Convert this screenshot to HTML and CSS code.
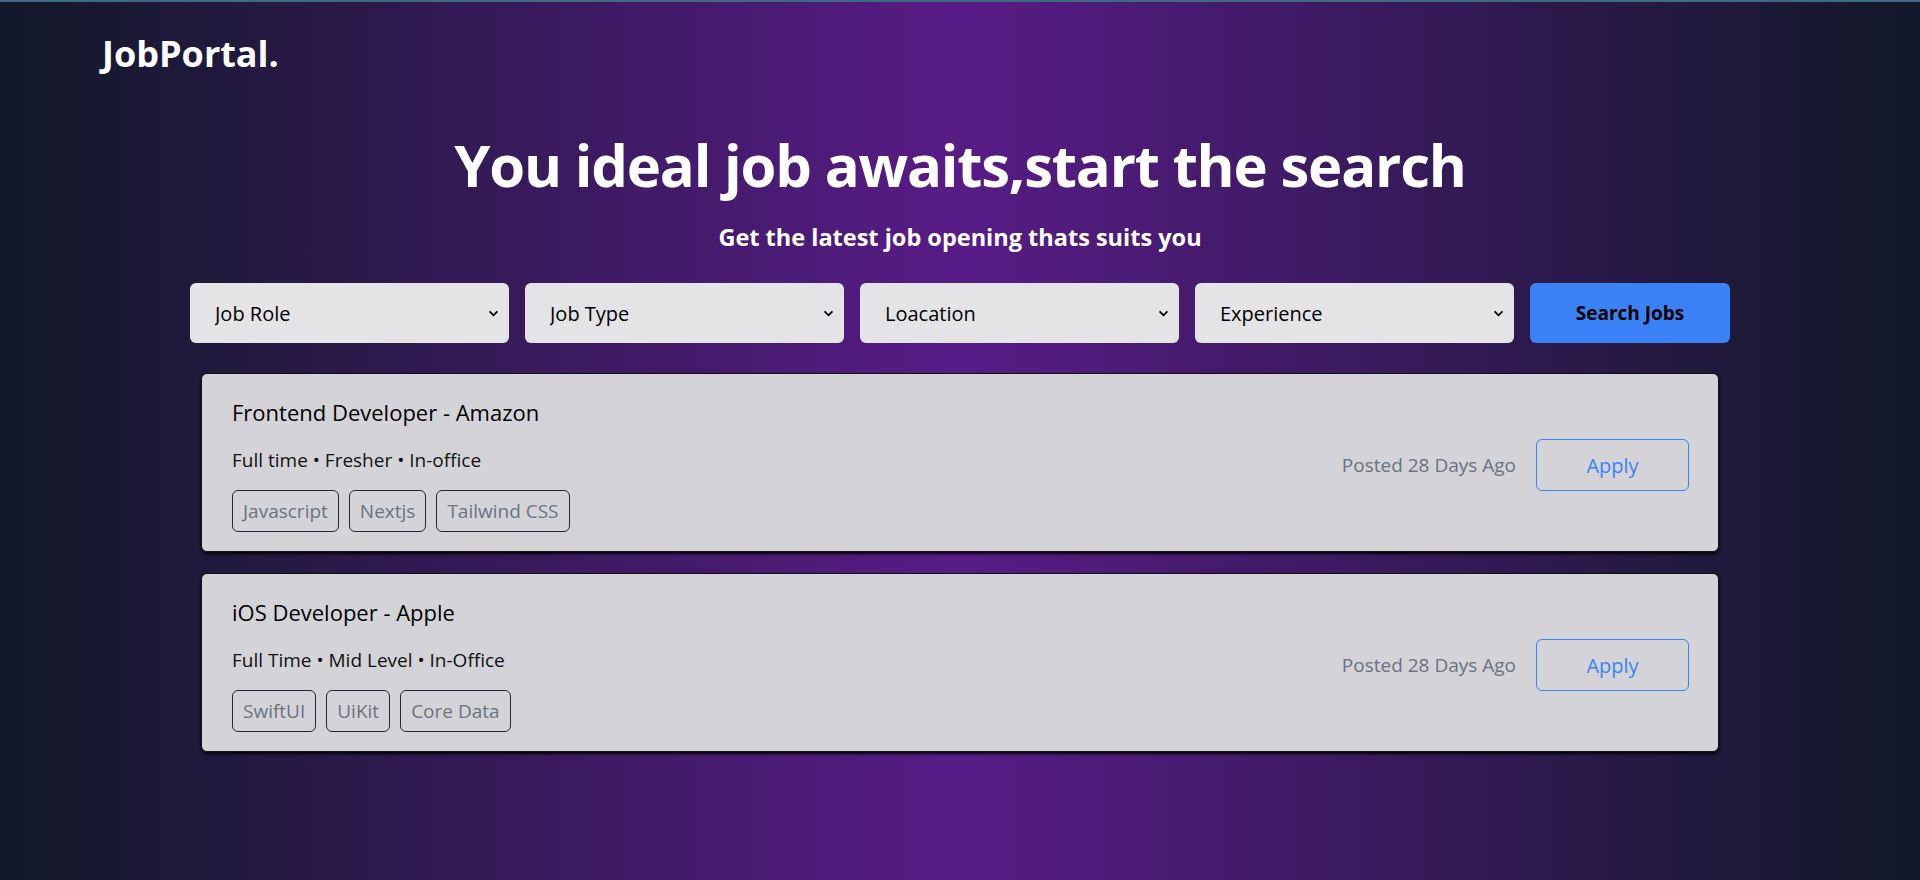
FILE: index.html
```html
<!DOCTYPE html>
<html lang="en">
<head>
<meta charset="utf-8">
<title>JobPortal</title>
<link rel="stylesheet" href="styles.css">
</head>
<body>
<div class="page">
  <header class="nav">
    <div class="logo">JobPortal.</div>
  </header>
  <main class="hero">
    <h1 class="title">You ideal job awaits,start the search</h1>
    <p class="subtitle">Get the latest job opening thats suits you</p>
    <form class="filters">
      <select class="filter"><option>Job Role</option></select>
      <select class="filter"><option>Job Type</option></select>
      <select class="filter"><option>Loacation</option></select>
      <select class="filter"><option>Experience</option></select>
      <button type="button" class="search-btn">Search Jobs</button>
    </form>
    <section class="jobs">
      <article class="job-card">
        <div class="job-info">
          <h2 class="job-title">Frontend Developer - Amazon</h2>
          <p class="job-meta">Full time • Fresher • In-office</p>
          <div class="tags">
            <span class="tag">Javascript</span>
            <span class="tag">Nextjs</span>
            <span class="tag">Tailwind CSS</span>
          </div>
        </div>
        <div class="job-actions">
          <span class="posted">Posted 28 Days Ago</span>
          <button type="button" class="apply-btn">Apply</button>
        </div>
      </article>
      <article class="job-card">
        <div class="job-info">
          <h2 class="job-title">iOS Developer - Apple</h2>
          <p class="job-meta">Full Time • Mid Level • In-Office</p>
          <div class="tags">
            <span class="tag">SwiftUI</span>
            <span class="tag">UiKit</span>
            <span class="tag">Core Data</span>
          </div>
        </div>
        <div class="job-actions">
          <span class="posted">Posted 28 Days Ago</span>
          <button type="button" class="apply-btn">Apply</button>
        </div>
      </article>
    </section>
  </main>
</div>
</body>
</html>
```
FILE: styles.css
```css
* { box-sizing: border-box; }
html, body { margin: 0; padding: 0; }
body {
  font-family: "Open Sans", "Noto Sans", sans-serif;
  color: #fff;
}
.page {
  min-height: 880px;
  border-top: 2px solid #3e6b82;
  background: linear-gradient(to right, #111827, #581c87, #111827);
}
.nav {
  padding: 32px 102px 0;
}
.logo {
  font-size: 36px;
  line-height: 40px;
  font-weight: 700;
  color: #fff;
}
.hero {
  display: flex;
  flex-direction: column;
  align-items: center;
}
.title {
  margin: 61px 0 0;
  font-size: 58px;
  line-height: 60px;
  font-weight: 700;
  letter-spacing: -1.2px;
}
.subtitle {
  margin: 28px 0 0;
  font-size: 23.5px;
  line-height: 28px;
  font-weight: 700;
}
.filters {
  margin-top: 32px;
  width: 1540px;
  display: flex;
  gap: 16px;
}
.filter {
  flex: 1;
  min-width: 0;
  height: 60px;
  border: none;
  border-radius: 6px;
  padding: 0 32px 0 25px;
  font-family: inherit;
  font-size: 20px;
  font-weight: 500;
  color: #000;
  background-color: #e4e4e7;
  -webkit-appearance: none;
  appearance: none;
  background-image: url("data:image/svg+xml,%3Csvg xmlns='http://www.w3.org/2000/svg' width='12' height='8' viewBox='0 0 12 8'%3E%3Cpath d='M1.5 1.5 L6 6 L10.5 1.5' fill='none' stroke='%23000' stroke-width='2'/%3E%3C/svg%3E");
  background-repeat: no-repeat;
  background-position: right 10px center;
  background-size: 11px 7px;
}
.search-btn {
  width: 200px;
  flex: none;
  height: 60px;
  border: none;
  border-radius: 6px;
  background: #3b82f6;
  color: #000;
  font-family: inherit;
  font-size: 19px;
  font-weight: 700;
}
.jobs {
  margin-top: 30px;
  width: 1518px;
  display: flex;
  flex-direction: column;
  gap: 21px;
}
.job-card {
  display: flex;
  align-items: center;
  justify-content: space-between;
  background: #d4d4d8;
  border: 1px solid #111;
  border-radius: 6px;
  padding: 24px 29px 19px 30px;
  box-shadow: 0 2px 3px rgba(0, 0, 0, 0.9);
  color: #000;
}
.job-title {
  margin: 0;
  font-size: 22px;
  line-height: 28px;
  font-weight: 500;
}
.job-meta {
  margin: 20px 0 0;
  font-size: 19px;
  line-height: 28px;
  color: #111;
}
.tags {
  margin-top: 16px;
  display: flex;
  gap: 10px;
}
.tag {
  font-size: 19px;
  line-height: 28px;
  padding: 6px 10px;
  border: 1px solid #1f2937;
  border-radius: 6px;
  color: #6b7280;
}
.job-actions {
  display: flex;
  align-items: center;
  gap: 20px;
}
.posted {
  font-size: 19px;
  color: #6b7280;
}
.apply-btn {
  width: 153px;
  height: 52px;
  border: 1px solid #3b82f6;
  border-radius: 6px;
  background: transparent;
  color: #3b82f6;
  font-family: inherit;
  font-size: 20px;
}
```
